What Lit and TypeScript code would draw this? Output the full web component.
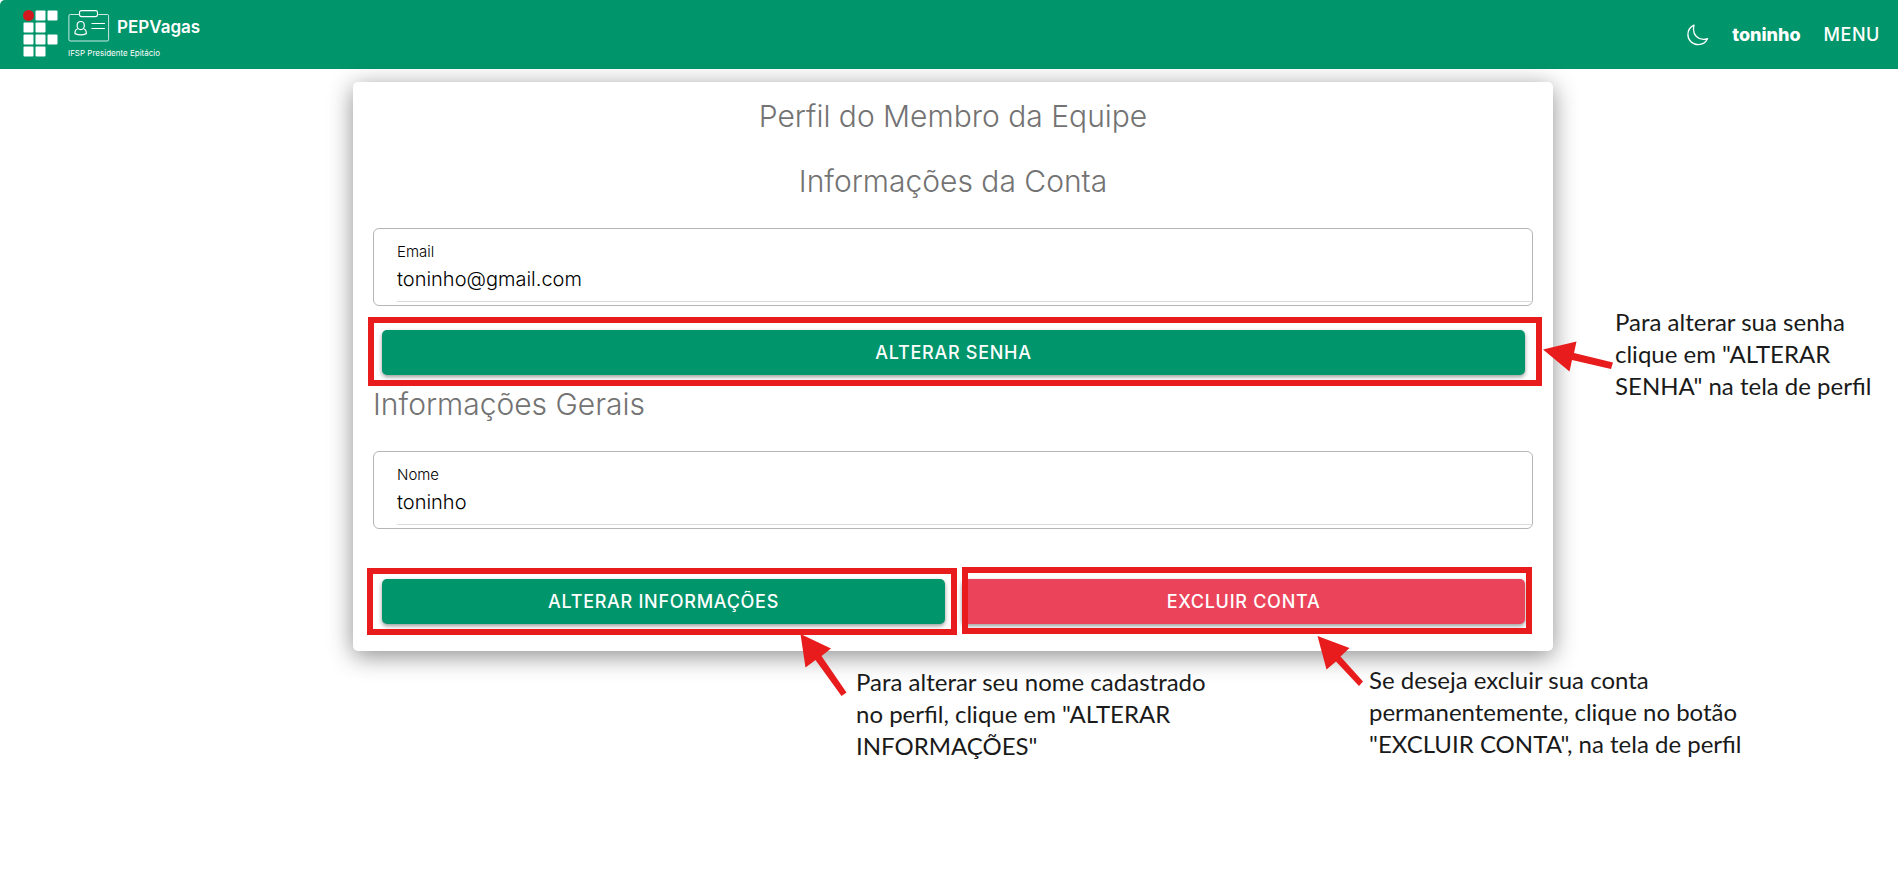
import { LitElement, html, svg, css } from "lit";
import { customElement, property } from "lit/decorators.js";

@customElement("app-header")
class AppHeader extends LitElement {
  @property() user = "";

  static styles = css`
    :host {
      display: block;
    }
    .bar {
      display: flex;
      align-items: center;
      justify-content: space-between;
      height: 69px;
      box-sizing: border-box;
      padding: 0 18px 0 22px;
      background: #00956b;
      color: #fff;
      border-top-left-radius: 5px;
      font-family: Inter, "Liberation Sans", sans-serif;
    }
    .brand {
      display: flex;
      gap: 10px;
      color: inherit;
      text-decoration: none;
    }
    .brand-text {
      display: flex;
      flex-direction: column;
      gap: 3px;
    }
    .brand-row {
      display: flex;
      gap: 7px;
      align-items: flex-start;
    }
    .brand-name {
      font-size: 17px;
      line-height: 34px;
      font-weight: 600;
    }
    .campus {
      font-size: 8px;
      line-height: 12px;
    }
    svg {
      display: block;
    }
    .actions {
      display: flex;
      align-items: center;
      gap: 23px;
    }
    button {
      border: 0;
      padding: 0;
      background: none;
      color: inherit;
      font: inherit;
      cursor: pointer;
    }
    .user {
      font-size: 18px;
      line-height: 24px;
      font-weight: 800;
    }
    .menu {
      font-size: 18px;
      line-height: 24px;
      font-weight: 500;
      letter-spacing: 0.03em;
    }
  `;

  render() {
    const cells = [
      [1, 0], [2, 0], [0, 1], [1, 1], [0, 2], [1, 2], [2, 2], [0, 3], [1, 3],
    ];
    return html`
      <header class="bar">
        <a class="brand" href="#">
          <svg width="36" height="48" viewBox="0 0 36 48" aria-hidden="true">
            <circle cx="6.5" cy="5.5" r="5.5" fill="#d0191f" />
            ${cells.map(
              ([c, r]) => svg`<rect x=${1.5 + c * 12} y=${0.5 + r * 12}
                width="10" height="10" rx="1" fill="#fff" />`
            )}
          </svg>
          <span class="brand-text">
            <span class="brand-row">
              <svg width="42" height="34" viewBox="0 0 42 34" fill="none" stroke="#fff" aria-hidden="true">
                <path d="M11 4.5H2.2Q.9 4.5.9 5.800v23.900q0 1.300 1.300 1.300h37.100q1.300 0 1.300-1.300V5.800q0-1.300-1.300-1.300h-9" stroke-width="1" opacity=".8" />
                <rect x="11.5" y=".6" width="18" height="6" rx="2" stroke-width="1.100" />
                <path d="M12.700 11.500c2.300 0 3.600 1.700 3.600 4s-1.500 4.200-3.600 4.200-3.600-1.900-3.600-4.200 1.300-4 3.600-4z" stroke-width="1.200" />
                <path d="M9.800 18.800c-2 .6-3 2.700-2.800 4.800 3.500 1.500 8 1.500 11.300 0 .2-2.100-.8-4.200-2.800-4.800" stroke-width="1.200" />
                <path d="M23.500 13.500h13.500M23.500 18.500h13.500" stroke-width="1.200" />
              </svg>
              <span class="brand-name">PEPVagas</span>
            </span>
            <span class="campus">IFSP Presidente Epitácio</span>
          </span>
        </a>
        <div class="actions">
          <button type="button" aria-label="Modo escuro">
            <svg width="22" height="22" viewBox="0 0 22 22" fill="none" stroke="#fff" stroke-width="1.300" stroke-linejoin="round">
              <path d="M7 1.200C3.300 3 .9 6.600.9 10.600c0 5.700 4.600 10.100 10.300 10.100 4.100 0 7.800-2.500 9.400-6.100-1.300.5-2.700.8-4.200.8C10.900 15.400 6.500 11 6.500 5.500c0-1.600.1-3 .5-4.300z" />
            </svg>
          </button>
          <span class="user">${this.user}</span>
          <button class="menu" type="button">MENU</button>
        </div>
      </header>
    `;
  }
}

@customElement("profile-field")
class ProfileField extends LitElement {
  @property() label = "";
  @property() value = "";

  static styles = css`
    :host {
      display: block;
    }
    .field {
      display: flex;
      flex-direction: column;
      box-sizing: border-box;
      height: 78px;
      padding: 13px 1px 3px 23px;
      border: 1px solid #b5b5b5;
      border-radius: 6px;
      font-family: Inter, "Liberation Sans", sans-serif;
      font-weight: 300;
      color: #000;
    }
    label {
      font-size: 15px;
      line-height: 20px;
    }
    input {
      flex: 1;
      min-width: 0;
      border: 0;
      border-bottom: 1px solid #dcdcdc;
      padding: 0 0 6px;
      outline: 0;
      background: none;
      font: inherit;
      font-size: 20px;
      color: inherit;
    }
  `;

  render() {
    return html`
      <div class="field">
        <label for="control">${this.label}</label>
        <input id="control" type="text" readonly .value=${this.value} />
      </div>
    `;
  }
}

@customElement("app-root")
class AppRoot extends LitElement {
  static styles = css`
    :host {
      display: block;
      min-height: 100vh;
      background: #fff;
      font-family: Inter, "Liberation Sans", sans-serif;
    }
    main {
      padding: 13px 0 0 8px;
    }
    .card {
      max-width: 1200px;
      box-sizing: border-box;
      margin: 0 auto;
      padding: 16px 20px 27px;
      border-radius: 5px;
      background: #fff;
      box-shadow: 0 5px 24px rgba(0, 0, 0, 0.45);
    }
    h1,
    h2 {
      margin: 0 0 29px;
      font-size: 30px;
      line-height: 36px;
      font-weight: 300;
      color: #737373;
    }
    .centered {
      text-align: center;
    }
    .row {
      display: grid;
      grid-auto-flow: column;
      grid-auto-columns: 1fr;
      gap: 17px;
      padding: 0 8px 0 9px;
    }
    .account {
      margin: 24px 0 11px;
    }
    .general {
      margin-top: 50px;
    }
    .target {
      position: relative;
    }
    .btn {
      display: block;
      width: 100%;
      height: 45px;
      border: 0;
      border-radius: 5px;
      background: #00956b;
      color: #fff;
      font-family: inherit;
      font-size: 18px;
      font-weight: 500;
      letter-spacing: 0.04em;
      box-shadow: 0 2px 4px rgba(0, 0, 0, 0.4);
      cursor: pointer;
    }
    .danger {
      background: #eb445a;
    }
    .mark {
      position: absolute;
      border: 6px solid #e81c1c;
      pointer-events: none;
    }
    .mark-password {
      inset: -13px -17px -11px -14px;
    }
    .mark-edit {
      inset: -11px -12px -11px -15px;
    }
    .mark-delete {
      inset: -12px -7px -10px 0;
    }
    .arrow {
      position: absolute;
      display: block;
      overflow: visible;
      fill: #e81c1c;
    }
    .note {
      position: absolute;
      margin: 0;
      font-family: Lato, "Open Sans", sans-serif;
      font-size: 24px;
      line-height: 32px;
      color: #1a1a1a;
      white-space: nowrap;
    }
    .arrow-password {
      left: calc(100% + 18px);
      top: 11px;
    }
    .note-password {
      left: calc(100% + 90px);
      top: -24px;
    }
    .arrow-edit {
      left: 418px;
      top: 55px;
    }
    .note-edit {
      left: 474px;
      top: 87px;
    }
    .arrow-delete {
      left: 355px;
      top: 57px;
    }
    .note-delete {
      left: 407px;
      top: 85px;
    }
  `;

  render() {
    return html`
      <app-header user="toninho"></app-header>
      <main>
        <section class="card">
          <h1 class="centered">Perfil do Membro da Equipe</h1>
          <h2 class="centered">Informações da Conta</h2>
          <profile-field label="Email" value="toninho@gmail.com"></profile-field>
          <div class="row account">
            <div class="target">
              <button class="btn" type="button">ALTERAR SENHA</button>
              <div class="mark mark-password"></div>
              <svg class="arrow arrow-password" width="70" height="30" viewBox="0 0 70 30" aria-hidden="true">
                <path d="M0 8.500 33.500.500 31 12l39 9.500-2 6.500-39-9L26.500 30.500z" />
              </svg>
              <p class="note note-password">Para alterar sua senha<br />clique em "ALTERAR<br />SENHA" na tela de perfil</p>
            </div>
          </div>
          <h2>Informações Gerais</h2>
          <profile-field label="Nome" value="toninho"></profile-field>
          <div class="row general">
            <div class="target">
              <button class="btn" type="button">ALTERAR INFORMAÇÕES</button>
              <div class="mark mark-edit"></div>
              <svg class="arrow arrow-edit" width="47" height="62" viewBox="0 0 47 62" aria-hidden="true">
                <path d="M.500 0 31 14.500 21.500 22 46.500 58.500 41.500 62 15.500 26 5.500 33.500z" />
              </svg>
              <p class="note note-edit">Para alterar seu nome cadastrado<br />no perfil, clique em "ALTERAR<br />INFORMAÇÕES"</p>
            </div>
            <div class="target">
              <button class="btn danger" type="button">EXCLUIR CONTA</button>
              <div class="mark mark-delete"></div>
              <svg class="arrow arrow-delete" width="46" height="50" viewBox="0 0 46 50" aria-hidden="true">
                <path d="M.500 0 32.500 12 23.500 20.500 46 45.500 42 50 19 25.500 9.500 33.500z" />
              </svg>
              <p class="note note-delete">Se deseja excluir sua conta<br />permanentemente, clique no botão<br />"EXCLUIR CONTA", na tela de perfil</p>
            </div>
          </div>
        </section>
      </main>
    `;
  }
}
